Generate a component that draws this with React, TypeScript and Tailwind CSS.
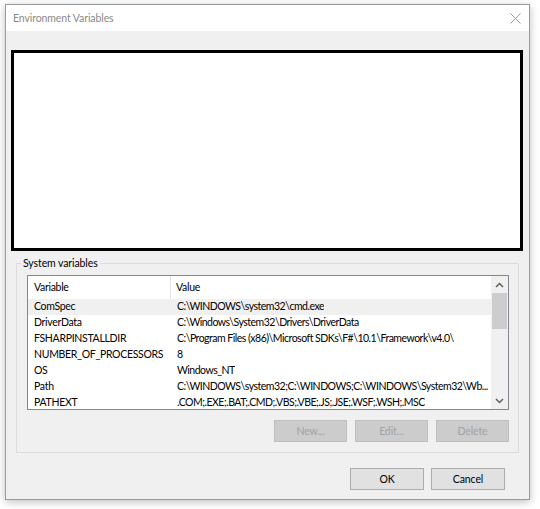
import { useState } from "react";

type EnvVar = { name: string; value: string };

const vars: EnvVar[] = [
  { name: "ComSpec", value: "C:\\WINDOWS\\system32\\cmd.exe" },
  { name: "DriverData", value: "C:\\Windows\\System32\\Drivers\\DriverData" },
  { name: "FSHARPINSTALLDIR", value: "C:\\Program Files (x86)\\Microsoft SDKs\\F#\\10.1\\Framework\\v4.0\\" },
  { name: "NUMBER_OF_PROCESSORS", value: "8" },
  { name: "OS", value: "Windows_NT" },
  { name: "Path", value: "C:\\WINDOWS\\system32;C:\\WINDOWS;C:\\WINDOWS\\System32\\Wb..." },
  { name: "PATHEXT", value: ".COM;.EXE;.BAT;.CMD;.VBS;.VBE;.JS;.JSE;.WSF;.WSH;.MSC" },
];

function App() {
  const [selected, setSelected] = useState(0);

  return (
    <div
      className="w-[540px] h-[509px] bg-white pt-[4px] pl-[5px] text-[10.5px] tracking-[-0.1px] text-black overflow-hidden"
      style={{ fontFamily: 'Lato, "Noto Sans", sans-serif' }}
    >
      <div className="w-[525px] h-[496px] border border-[#9a9a9a] bg-[#f0f0f0] flex flex-col shadow-[0_2px_8px_rgba(0,0,0,0.25)]">
        {/* title bar */}
        <div className="h-[26px] bg-white flex items-center justify-between pl-[7px] pr-[8px] shrink-0">
          <span className="text-[#8a8a8a] leading-none">Environment Variables</span>
          <svg width="11" height="11" viewBox="0 0 11 11" className="stroke-[#9a9a9a]">
            <path d="M0.5 0.5 L10.5 10.5 M10.5 0.5 L0.5 10.5" strokeWidth="1" />
          </svg>
        </div>

        <div className="flex flex-col pl-[5px] pt-[19px]">
          {/* blank area */}
          <div className="w-[512px] h-[201px] border-[3px] border-black bg-white" />

          {/* system variables group */}
          <fieldset className="ml-[5px] mt-[5px] w-[503px] min-w-0 h-[197px] border border-[#dcdcdc] pl-[10px] pr-[9px] pb-[10px]">
            <legend className="-ml-[6px] px-[2px] leading-[14px]">System variables</legend>

            <div className="mt-[5px] w-[482px] h-[135px] border border-[#828790] bg-white flex">
              <div className="flex-1 min-w-0 flex flex-col overflow-hidden tracking-[-0.3px]">
                <div className="h-[23px] flex items-center shrink-0">
                  <div className="w-[143px] shrink-0 pl-[6px] border-r border-[#e5e5e5] h-full flex items-center">Variable</div>
                  <div className="pl-[5px]">Value</div>
                </div>
                {vars.map((v, i) => (
                  <div
                    key={v.name}
                    onClick={() => setSelected(i)}
                    className={
                      "h-[16px] flex items-center shrink-0 whitespace-nowrap " +
                      (i === selected ? "bg-[#f0f0f0]" : "")
                    }
                  >
                    <div className="w-[143px] shrink-0 pl-[6px] overflow-hidden">{v.name}</div>
                    <div className="pl-[6px] min-w-0 overflow-hidden tracking-[-0.5px]">{v.value}</div>
                  </div>
                ))}
              </div>

              {/* scrollbar */}
              <div className="w-[17px] shrink-0 bg-[#f0f0f0] flex flex-col items-center">
                <div className="h-[17px] flex items-center justify-center">
                  <svg width="9" height="6" viewBox="0 0 9 6">
                    <path d="M1 5 L4.5 1.5 L8 5" fill="none" stroke="#606060" strokeWidth="1.5" />
                  </svg>
                </div>
                <div className="w-[15px] h-[36px] bg-[#cdcdcd]" />
                <div className="flex-1" />
                <div className="h-[17px] flex items-center justify-center">
                  <svg width="9" height="6" viewBox="0 0 9 6">
                    <path d="M1 1 L4.5 4.5 L8 1" fill="none" stroke="#606060" strokeWidth="1.5" />
                  </svg>
                </div>
              </div>
            </div>

            <div className="mt-[10px] w-[482px] flex justify-end gap-[8px]">
              {["New...", "Edit...", "Delete"].map((label) => (
                <button
                  key={label}
                  disabled
                  className="w-[73px] h-[22px] bg-[#cccccc] border border-[#bfbfbf] text-[#a3a3a3] leading-none"
                >
                  {label}
                </button>
              ))}
            </div>
          </fieldset>

          <div className="mt-[15px] pr-[24px] flex justify-end gap-[7px]">
            <button className="w-[74px] h-[22px] bg-[#e1e1e1] border border-[#adadad] leading-none">OK</button>
            <button className="w-[74px] h-[22px] bg-[#e1e1e1] border border-[#adadad] leading-none">Cancel</button>
          </div>
        </div>
      </div>
    </div>
  );
}

export default App;
